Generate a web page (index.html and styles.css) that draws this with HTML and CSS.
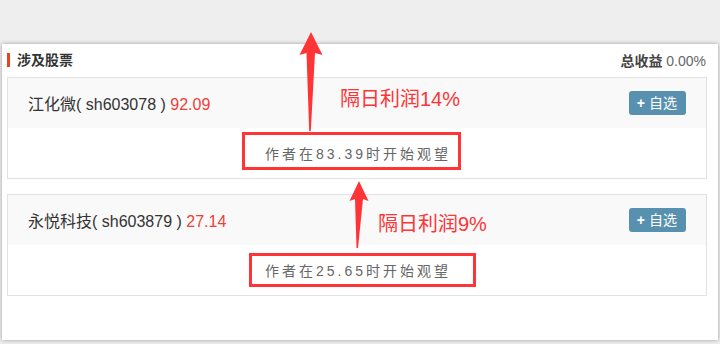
FILE: index.html
```html
<!DOCTYPE html>
<html lang="zh">
<head>
<meta charset="utf-8">
<link rel="stylesheet" href="styles.css">
</head>
<body>
<div class="panel">
  <div class="head">
    <div class="title">涉及股票</div>
    <div class="total"><b>总收益</b> 0.00%</div>
  </div>
  <div class="card">
    <div class="card-top">
      <div class="stock">江化微( sh603078 ) <span class="price">92.09</span></div>
      <button class="btn"><span class="plus">+</span>自选</button>
    </div>
    <div class="card-bottom">作者在83.39时开始观望</div>
  </div>
  <div class="card">
    <div class="card-top">
      <div class="stock">永悦科技( sh603879 ) <span class="price">27.14</span></div>
      <button class="btn"><span class="plus">+</span>自选</button>
    </div>
    <div class="card-bottom">作者在25.65时开始观望</div>
  </div>
</div>
<div class="annot">
  <svg class="arrows" width="720" height="344" viewBox="0 0 720 344">
    <polygon points="311,32 322.5,55 315,53 310.8,131 309.2,131 306.5,53 299.5,55" fill="#fe3436"/>
    <polygon points="359,181 368.5,201 363,199 358,248 356.5,248 355,199 349.5,201" fill="#fe3436"/>
  </svg>
  <div class="box box1"></div>
  <div class="box box2"></div>
  <div class="note note1">隔日利润14%</div>
  <div class="note note2">隔日利润9%</div>
</div>
</body>
</html>
```
FILE: styles.css
```css
html, body {
  margin: 0;
  padding: 0;
}
body {
  width: 720px;
  height: 344px;
  background: #eeeeee;
  font-family: "Liberation Sans", "Noto Sans CJK SC", sans-serif;
  position: relative;
  overflow: hidden;
}
.panel {
  margin: 44px 0 0 2px;
  width: 716px;
  height: 296px;
  box-sizing: border-box;
  background: #fff;
  box-shadow: 0 0 4px rgba(0, 0, 0, 0.35);
  padding: 6px 11px 0 5px;
}
.head {
  display: flex;
  justify-content: space-between;
  align-items: center;
  height: 20px;
  margin-bottom: 7px;
  font-size: 14px;
}
.title {
  font-weight: bold;
  color: #333;
  border-left: 3px solid #e8451e;
  padding-left: 7px;
  line-height: 14px;
}
.total {
  color: #666;
  padding-right: 1px;
}
.total b {
  color: #444;
}
.card {
  border: 1px solid #e2e2e2;
  margin-bottom: 15px;
}
.card-top {
  height: 50px;
  background: #f9f9f9;
  display: flex;
  align-items: center;
  justify-content: space-between;
  padding: 0 20px;
}
.stock {
  font-size: 16px;
  color: #333;
}
.price {
  color: #ee3f3a;
}
.btn {
  font-family: "Liberation Sans", "Noto Sans CJK SC", sans-serif;
  background: #5891af;
  color: #fff;
  border: 0;
  border-radius: 3px;
  height: 24px;
  padding: 0 9px 0 8px;
  font-size: 14px;
  line-height: 24px;
  display: flex;
  align-items: center;
}
.plus {
  font-weight: bold;
  margin-right: 4px;
}
.card-bottom {
  height: 50px;
  display: flex;
  align-items: center;
  justify-content: center;
  font-size: 14px;
  letter-spacing: 3px;
  color: #666;
  padding-left: 2px;
}
.annot {
  position: absolute;
  left: 0;
  top: 0;
  width: 720px;
  height: 344px;
  pointer-events: none;
}
.arrows {
  position: absolute;
  left: 0;
  top: 0;
}
.box {
  position: absolute;
  box-sizing: border-box;
  border: 3px solid #fe3436;
}
.box1 {
  left: 242px;
  top: 132px;
  width: 219px;
  height: 38px;
}
.box2 {
  left: 249px;
  top: 253px;
  width: 227px;
  height: 34px;
}
.note {
  position: absolute;
  font-size: 20px;
  line-height: 20px;
  color: #fe3436;
  font-family: "Liberation Sans", "Noto Sans CJK SC", sans-serif;
}
.note1 {
  left: 340px;
  top: 89px;
}
.note2 {
  left: 378px;
  top: 214px;
}
```
